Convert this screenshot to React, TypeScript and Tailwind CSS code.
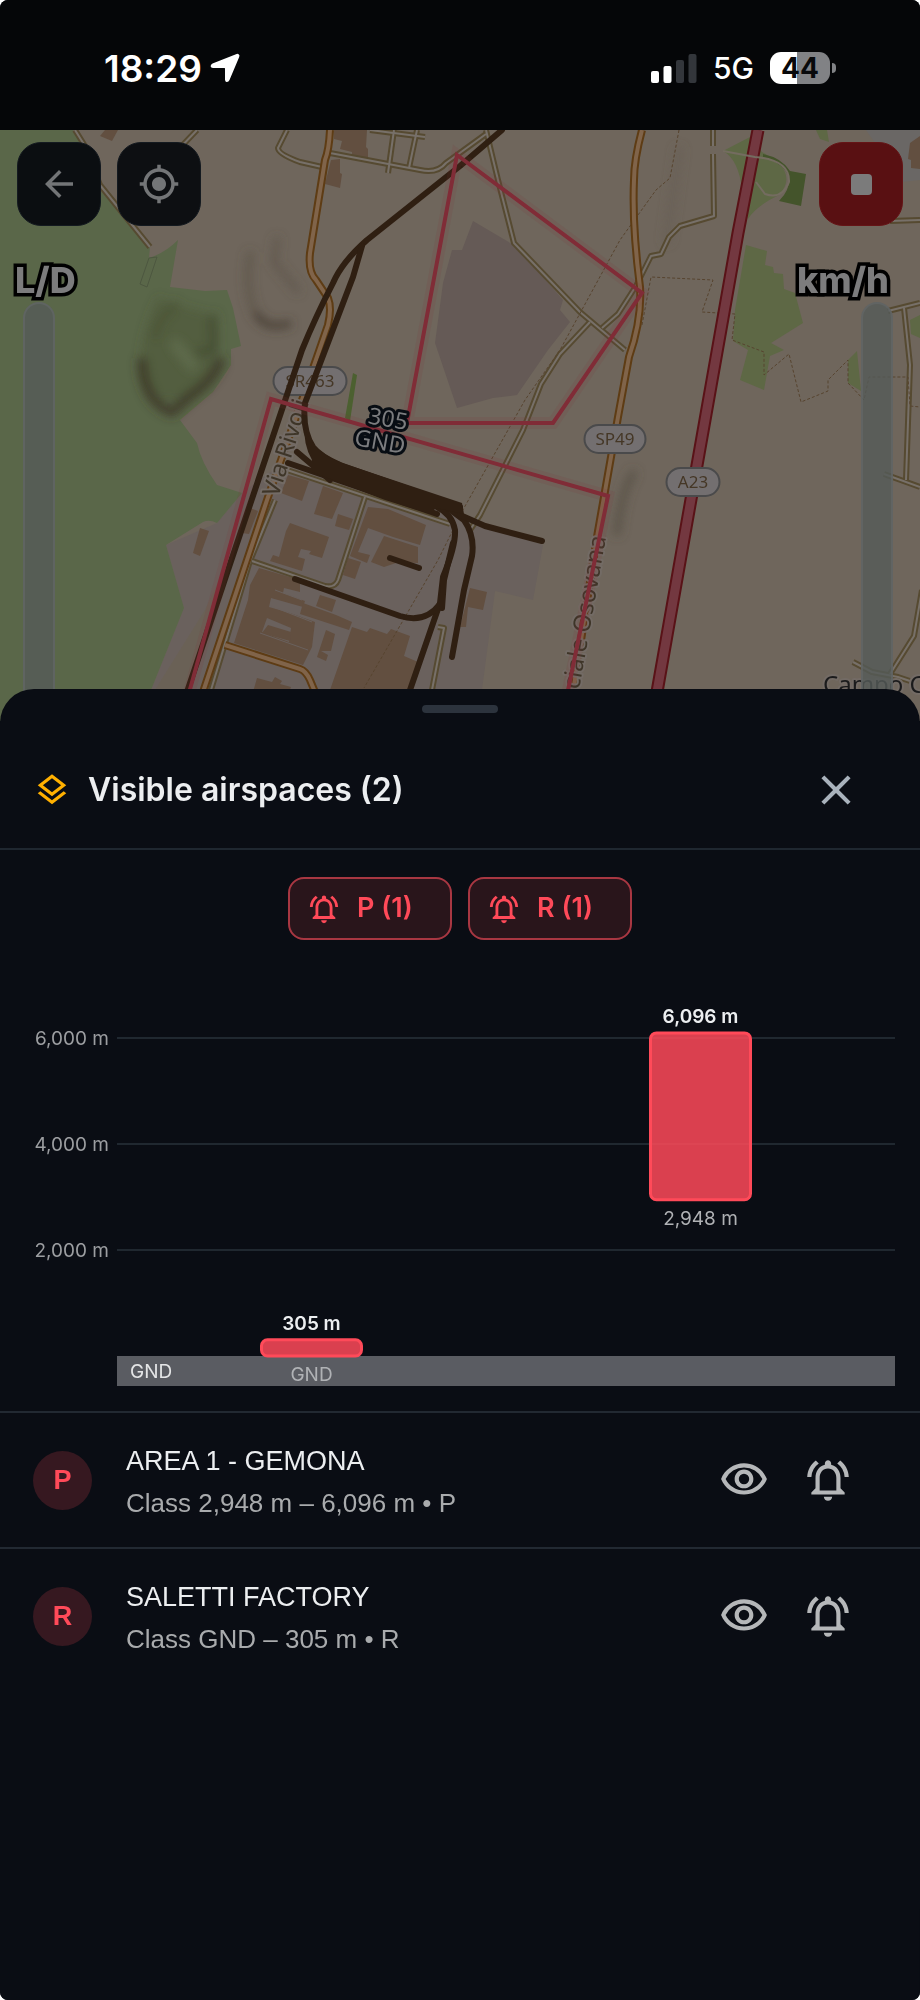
import {
  MdArrowBack,
  MdClose,
  MdMyLocation,
  MdOutlineLayers,
  MdOutlineNotificationsActive,
  MdOutlineVisibility,
} from "react-icons/md";

type Airspace = {
  name: string;
  kind: string;
  floor: number;
  ceiling: number;
};

const airspaces: Airspace[] = [
  { name: "AREA 1 - GEMONA", kind: "P", floor: 2948, ceiling: 6096 },
  { name: "SALETTI FACTORY", kind: "R", floor: 0, ceiling: 305 },
];

const formatAltitude = (m: number) =>
  m === 0 ? "GND" : `${m.toLocaleString("en-US")} m`;

const minorRoads = [
  "M75 130 L85 146 L100 185 L150 247",
  "M197 130 L178 150 L160 172",
  "M287 130 L278 148 Q278 154 300 162 L322 167",
  "M330 153 L420 170 Q437 174 446 163 L486 134",
  "M370 130 L425 137",
  "M394 130 L388 173",
  "M417 130 L409 168",
  "M486 130 L498 180 L514 243 L580 312 L625 350",
  "M590 322 L560 354 L541 384 L523 430 L480 515 L470 530",
  "M602 328 L618 314 L636 286 L651 256 L661 254 L669 237 L680 226 L714 216 L713 154",
  "M713 146 L713 130",
  "M890 221 L920 220",
  "M888 311 L920 303",
  "M904 308 L910 365 L906 480",
  "M884 474 L920 487",
  "M853 662 L872 672 L898 677 L910 681",
  "M890 674 L914 636 L922 590",
  "M280 468 L290 471 L450 524",
  "M365 497 L338 580 Q335 588 325 586 L252 561",
  "M275 500 L250 561 L211 690",
  "M432 690 L444 628 L438 627",
];

const orangeRoads = [
  "M330 130 Q329 150 325 160 L310 253 Q308 272 316 280 L328 298 Q332 308 328 325 L302 400 L267 500 L203 692",
  "M225 645 L300 669 Q306 671 310 680 L315 692",
  "M642 130 Q634 160 634 180 Q632 225 640 287 Q642 320 629 357 L618 417 L597 537 L573 692",
];

const footpaths = [
  "M679 130 L670 178 L656 190 L620 240 L560 350 L525 400 L460 515",
  "M642 325 L651 277 L713 280 L702 312 L735 314 L732 340 L764 352 L764 375 L789 354 L801 402 L828 391 L828 380 L848 360 L848 383 L864 400 L869 377 L908 377 L910 406 L920 407",
  "M453 530 L438 560 L364 688",
];

const railways = [
  "M502 130 L460 166 L367 240 Q342 262 333 283 Q315 318 302 350 L187 692",
  "M362 246 L353 277 L305 403 Q302 430 313 447 Q320 456 340 465 L460 507",
  "M288 463 L437 514",
  "M297 452 L330 480",
  "M437 507 Q452 514 455 530 Q456 545 443 577 L440 603 L410 690",
  "M295 579 L400 616 Q425 624 440 604",
  "M390 558 L419 568",
  "M444 505 L464 520 Q475 536 472 556 L464 590 L452 657",
  "M453 543 L444 580 L442 608",
  "M460 515 L485 526 L542 541",
];

const buildings = [
  "M334 130 L367 130 L366 147 L368 149 L368 158 L352 156 L352 152 L340 149 L342 141 L334 139Z",
  "M331 160 L340 159 L340 173 L342 174 L340 188 L325 184Z",
  "M105 130 L118 130 L112 141 L100 136Z",
  "M910 143 L920 136 L920 169 L911 168 L911 160 L908 159Z",
  "M288 475 L309 481 L302 501 L281 493Z",
  "M323 486 L343 493 L332 519 L314 514Z",
  "M338 514 L353 519 L349 530 L335 526Z",
  "M290 523 L312 531 L315 532 L329 537 L322 558 L309 554 L311 551 L301 549 L298 557 L305 559 L302 571 L270 561 L273 555 L279 557 L286 531Z",
  "M368 507 L388 509 L426 525 L420 545 L393 537 L368 528 L358 552 L370 555 L367 563 L350 556Z",
  "M384 536 L418 547 L418 563 L399 562 L384 567 L371 562Z",
  "M348 558 L361 562 L355 579 L343 575Z",
  "M200 528 L209 531 L200 556 L193 553Z",
  "M250 508 L258 511 L249 534 L242 533Z",
  "M259 568 L300 580 L300 592 L284 588 L283 593 L305 601 L303 607 L271 598 L269 607 L290 613 L315 622 L312 647 L303 665 L234 643 L248 600 L250 585Z",
  "M303 603 L336 615 L352 622 L349 630 L300 614Z",
  "M320 595 L336 600 L332 612 L316 606Z",
  "M326 630 L335 634 L331 651 L321 651 L328 655 L326 661 L317 657Z",
  "M352 627 L367 632 L370 628 L387 634 L391 629 L410 636 L404 656 L418 662 L409 690 L330 690Z",
  "M257 678 L272 682 L275 677 L282 681 L280 684 L291 687 L289 692 L253 692Z",
  "M470 588 L487 592 L483 610 L468 607 L466 627 L460 627Z",
];

const greens = [
  "M0 130 L73 130 L84 147 L100 190 L150 247 L149 258 Q165 253 178 240 L170 287 L205 291 L227 290 L233 308 L241 346 L231 349 L231 365 L213 392 L180 420 L197 443 Q201 462 217 485 L242 493 L217 523 Q209 519 203 522 L166 545 L184 608 L151 690 L151 725 L0 725Z",
  "M750 137 L723 151 Q739 160 742 190 L748 219 Q756 206 779 195 Q800 172 762 152Z",
  "M746 245 L767 251 L765 265 L773 267 L774 273 L783 274 L784 289 L795 293 L803 323 L771 343 L784 350 L770 356 L764 390 L740 380 L748 350 L733 341 L735 310Z",
  "M816 130 L827 130 L829 142 L820 139Z",
  "M848 360 L857 351 L861 391 L848 383Z",
  "M910 320 L920 315 L920 338 L911 334Z",
];

function RouteBadge({ x, y, width, label }: { x: number; y: number; width: number; label: string }) {
  return (
    <g>
      <rect x={x - width / 2} y={y - 14} width={width} height={28} rx={14} fill="#736f70" stroke="#4a4a4b" strokeWidth={2} />
      <text x={x} y={y + 6} textAnchor="middle" fontSize={17} fill="#453726">
        {label}
      </text>
    </g>
  );
}

function TerrainMap() {
  return (
    <svg
      viewBox="0 130 920 591"
      preserveAspectRatio="xMidYMin slice"
      className="absolute inset-0 h-full w-full"
      fontFamily="'Noto Sans', 'Open Sans', sans-serif"
      role="img"
      aria-label="Terrain map"
    >
      <defs>
        <filter id="relief" x="-30%" y="-30%" width="160%" height="160%">
          <feGaussianBlur stdDeviation="5" />
        </filter>
      </defs>
      <rect y={130} width={920} height={591} fill="#6f665c" />

      {/* land use */}
      <path d="M242 493 L217 523 L166 545 L184 608 L151 690 L240 720 L478 720 L495 591 L533 600 L543 545 L460 515 L280 465Z" fill="#6a615d" />
      <path d="M235 545 L205 610 L155 690 L190 690 L225 590Z" fill="#6a6156" />
      <path d="M473 221 L517 247 L563 300 L560 310 L570 322 L548 350 L517 395 L493 398 L457 408 L435 343 L443 283 L452 250 L462 250Z" fill="#655a56" />
      <path d="M866 130 L920 130 L920 180 L902 182Z" fill="#6a6765" />
      {greens.map((d, i) => (
        <path key={d} d={d} fill={i === 0 ? "#5a6749" : "#5e6845"} />
      ))}
      <path d="M763 154 Q782 158 790 171 L806 174 L801 206 L779 201 Q790 190 789 178 Q785 164 763 157Z" fill="#44542b" />
      <path d="M353 373 L357 375 L350 421 L345 418Z" fill="#4c6030" />
      <path d="M149 258 L157 257 L147 287 L140 284Z" fill="none" stroke="#4d5740" />

      {/* hill shading */}
      <g filter="url(#relief)" fill="none" strokeLinecap="round" strokeLinejoin="round">
        <path d="M160 300 Q140 340 144 380 Q160 404 190 394 Q222 370 215 315" fill="#4c5638" stroke="#4c5638" strokeWidth={6} opacity={0.45} />
        <path d="M175 305 Q158 320 155 335" stroke="#46502f" strokeWidth={9} opacity={0.5} />
        <path d="M142 362 Q144 402 172 412 L190 396 Q212 382 220 362" stroke="#3b3424" strokeWidth={10} opacity={0.8} />
        <path d="M212 320 L214 350 L200 352" stroke="#43482d" strokeWidth={9} opacity={0.6} />
        <path d="M176 345 L192 365" stroke="#626f50" strokeWidth={12} opacity={0.7} />
        <path d="M250 255 Q244 290 256 315" stroke="#574d42" strokeWidth={8} opacity={0.5} />
        <path d="M258 316 Q266 330 288 324" stroke="#473e33" strokeWidth={8} opacity={0.8} />
        <path d="M277 240 L274 262 L297 290" stroke="#5a5147" strokeWidth={7} opacity={0.6} />
        <path d="M633 474 Q622 490 617 532" stroke="#564e43" strokeWidth={8} opacity={0.7} />
        <path d="M679 150 L667 240" stroke="#675e54" strokeWidth={7} opacity={0.7} />
      </g>

      {buildings.map((d) => (
        <path key={d} d={d} fill="#624f40" />
      ))}
      <path d="M267 618 L291 628 L289 642 L262 632Z" fill="#6a615d" />
      <path d="M268 625 L291 632 L290 641 L262 633Z" fill="#624f40" />
      <path d="M260 633 L308 650 M271 606 L312 622 M275 590 L302 600" stroke="#6a615d" fill="none" />

      {/* roads: dark casing first, lighter fill above */}
      <g fill="none" strokeLinejoin="round">
        {minorRoads.map((d) => (
          <path key={d} d={d} stroke="#564a31" strokeWidth={6} />
        ))}
        {minorRoads.map((d) => (
          <path key={d} d={d} stroke="#777069" strokeWidth={2} />
        ))}
        {footpaths.map((d) => (
          <path key={d} d={d} stroke="#57442f" strokeWidth={1} strokeDasharray="3 2" />
        ))}
        {orangeRoads.map((d) => (
          <path key={d} d={d} stroke="#5e3c14" strokeWidth={8} />
        ))}
        {orangeRoads.map((d) => (
          <path key={d} d={d} stroke="#80644a" strokeWidth={4} />
        ))}
        <path d="M758 130 L738 233 L657 692" stroke="#591217" strokeWidth={13} />
        <path d="M758 130 L738 233 L657 692" stroke="#733840" strokeWidth={9} />
        <path d="M723 151 L755 157 Q790 160 789 182 Q782 200 765 194 L756 182" stroke="#746c60" strokeWidth={2} />
      </g>

      <RouteBadge x={310} y={381} width={73} label="SR463" />
      <g fontSize={24} fill="#3e3528" stroke="#736b65" strokeWidth={4} paintOrder="stroke" strokeLinejoin="round">
        <text transform="translate(278 498) rotate(-72)">Via Rivoli</text>
        <text transform="translate(606 537) rotate(-80)" textAnchor="end">
          ciale Osovana
        </text>
        <text x={823} y={693} fill="#1b1b1c">
          Campo C
        </text>
      </g>

      <g fill="none" stroke="#2f1f12" strokeWidth={6} strokeLinecap="round" strokeLinejoin="round">
        {railways.map((d) => (
          <path key={d} d={d} />
        ))}
      </g>
      <path d="M304 420 Q306 450 345 464 L462 503 L464 514 L436 508 L430 514 L385 500 L312 472 L312 460 Q303 445 304 420Z" fill="#2f1f12" />

      {/* airspace outlines */}
      <g fill="none" strokeLinejoin="miter">
        <path d="M457 155 L642 293 L553 423 L407 423Z" stroke="#803038" strokeWidth={12} opacity={0.12} />
        <path d="M187 700 L271 399 L608 496 L566 700" stroke="#803038" strokeWidth={12} opacity={0.12} />
        <path d="M457 155 L642 293 L553 423 L407 423Z" stroke="#802c37" strokeWidth={4} />
        <path d="M187 700 L271 399 L608 496 L566 700" stroke="#802c37" strokeWidth={4} />
      </g>

      <RouteBadge x={615} y={439} width={61} label="SP49" />
      <RouteBadge x={693} y={482} width={53} label="A23" />

      <g
        transform="translate(383 430) rotate(10)"
        fontSize={23}
        textAnchor="middle"
        fill="#7c7d7f"
        stroke="#080d13"
        strokeWidth={6}
        paintOrder="stroke"
        strokeLinejoin="round"
      >
        <text x={3} y={-4}>305</text>
        <text x={-1} y={20}>GND</text>
      </g>
    </svg>
  );
}

function StatusBar() {
  return (
    <div className="flex h-[130px] items-center justify-between bg-[#050608] pt-1.5 pr-[84px] pl-[104px] font-['Inter',sans-serif] text-white">
      <div className="flex items-center gap-2">
        <span className="text-[37px] leading-none font-semibold">18:29</span>
        <svg viewBox="0 0 30 30" className="h-[30px] w-[30px]" fill="currentColor" aria-hidden="true">
          <path d="M28.600 1.300 Q30 2 29.200 4 L19.500 27 Q18.500 29.300 16.500 29 Q15 28.500 15 26.500 L15 15.500 Q15 15 14.500 15 L3 15 Q.8 14.800.6 13.200 Q.6 11.500 2.500 10.500 L26 1.200 Q27.700.5 28.600 1.300Z" />
        </svg>
      </div>
      <div className="flex items-center">
        <svg viewBox="0 0 46 29" className="h-[29px] w-[46px]" aria-hidden="true">
          <rect x="0" y="17" width="8" height="12" rx="2" fill="#fff" />
          <rect x="12.500" y="12" width="8" height="17" rx="2" fill="#fff" />
          <rect x="25" y="6" width="8" height="23" rx="2" fill="#33363b" />
          <rect x="37.500" y="0" width="8" height="29" rx="2" fill="#33363b" />
        </svg>
        <span className="ml-4 text-[30px] leading-none font-medium">5G</span>
        <div className="ml-4 flex h-8 w-[60px] items-center justify-center rounded-[11px] bg-linear-to-r from-white from-45% to-[#818285] to-45% text-[28px] leading-none font-bold text-[#08090b]">
          44
        </div>
        <div className="ml-0.5 h-2.5 w-1 rounded-r-full bg-[#818285]" />
      </div>
    </div>
  );
}

const gaugeLabel =
  "text-[36px] leading-[44px] font-extrabold text-[#7c7c7d] [paint-order:stroke] [-webkit-text-stroke:7px_#000]";
const gaugeTrack = "w-8 flex-1 rounded-t-full border-2 border-b-0 border-[#66696b]/60 bg-[#555b59]/80";

function MapPanel() {
  return (
    <section className="relative flex h-[591px] flex-col overflow-hidden font-['Inter',sans-serif]">
      <TerrainMap />
      <div className="relative flex gap-4 px-[17px] pt-3">
        <button aria-label="Back" className="grid size-[84px] place-items-center rounded-3xl border border-[#141a20] bg-[#0b0e11] text-[#737577]">
          <MdArrowBack size={42} />
        </button>
        <button aria-label="Center on position" className="grid size-[84px] place-items-center rounded-3xl border border-[#141a20] bg-[#0d0f12] text-[#737577]">
          <MdMyLocation size={42} />
        </button>
        <button aria-label="Stop recording" className="ml-auto grid size-[84px] place-items-center rounded-3xl border border-[#651416] bg-[#591012]">
          <span className="size-[21px] rounded-sm bg-[#7b7b7b]" />
        </button>
      </div>
      <div className="relative flex flex-1 justify-between px-[15px] pt-8">
        <div className="flex flex-col items-start">
          <span className={gaugeLabel}>L/D</span>
          <div className={`ml-2 ${gaugeTrack}`} />
        </div>
        <div className="flex flex-col items-end">
          <span className={`mr-4 ${gaugeLabel}`}>km/h</span>
          <div className={`mr-3 ${gaugeTrack}`} />
        </div>
      </div>
    </section>
  );
}

const GROUND_Y = 416;
const METERS_TO_PX = 0.053;
const altitudeToY = (m: number) => GROUND_Y - m * METERS_TO_PX;

function AltitudeChart() {
  const columns = [...airspaces].sort((a, b) => a.floor - b.floor);

  return (
    <svg
      viewBox="0 0 920 471"
      className="block w-full"
      fontFamily="Inter, sans-serif"
      fontSize={19}
      role="img"
      aria-label="Airspace altitudes"
    >
      {[2000, 4000, 6000].map((m) => (
        <g key={m}>
          <line x1={117} x2={895} y1={altitudeToY(m)} y2={altitudeToY(m)} stroke="#202830" strokeWidth={2} />
          <text x={109} y={altitudeToY(m) + 7} textAnchor="end" fill="#9c9ea1">
            {formatAltitude(m)}
          </text>
        </g>
      ))}
      <rect x={117} y={GROUND_Y} width={778} height={30} fill="#5a5c62" />
      <text x={130} y={GROUND_Y + 22} fill="#e4e5e6">
        GND
      </text>
      {columns.map((space, i) => {
        const center = 117 + (778 / columns.length) * (i + 0.5);
        const top = altitudeToY(space.ceiling);
        const bottom = altitudeToY(space.floor);
        return (
          <g key={space.name} textAnchor="middle">
            <rect
              x={center - 50}
              y={top}
              width={100}
              height={bottom - top}
              rx={6}
              fill="#ff4a59"
              fillOpacity={0.85}
              stroke="#ff4a59"
              strokeWidth={3}
            />
            <text x={center} y={top - 10} fontWeight={600} fill="#eceef0">
              {formatAltitude(space.ceiling)}
            </text>
            <text x={center} y={bottom + 25} fill="#b0b2b5">
              {formatAltitude(space.floor)}
            </text>
          </g>
        );
      })}
    </svg>
  );
}

function AirspaceRow({ space }: { space: Airspace }) {
  return (
    <li className="flex h-[136px] items-center border-t-2 border-[#222932] pr-[67px] pl-[33px]">
      <span className="grid size-[59px] shrink-0 place-items-center rounded-full bg-[#361820] text-[27px] font-bold text-[#ff4a59]">
        {space.kind}
      </span>
      <div className="ml-[34px] min-w-0 flex-1 pt-1">
        <h2 className="text-[27px] leading-[42px] text-[#eceef0]">{space.name}</h2>
        <p className="text-[26px] leading-[42px] text-[#a9abad]">
          Class {formatAltitude(space.floor)} – {formatAltitude(space.ceiling)} • {space.kind}
        </p>
      </div>
      <div className="flex gap-[34px] text-[#b5b7b9]">
        <button aria-label={`Hide ${space.name}`}>
          <MdOutlineVisibility size={50} />
        </button>
        <button aria-label={`Alerts for ${space.name}`}>
          <MdOutlineNotificationsActive size={50} />
        </button>
      </div>
    </li>
  );
}

export default function App() {
  return (
    <div className="bg-white">
      <main className="flex min-h-screen flex-col overflow-hidden rounded-lg bg-[#0a0d14] font-['Liberation_Sans',Arial,sans-serif]">
        <StatusBar />
        <MapPanel />

        <section className="relative -mt-8 flex-1 rounded-t-[34px] bg-[#0a0d14]">
          <div className="flex justify-center pt-4">
            <div className="h-2 w-[76px] rounded-full bg-[#2c333d]" />
          </div>
          <header className="flex h-[137px] items-center border-b-2 border-[#1f2730] pt-[18px] pr-[59px] pl-[33px]">
            <MdOutlineLayers size={38} className="text-[#ffb000]" />
            <h1 className="ml-[17px] font-['Inter',sans-serif] text-[32px] leading-10 font-semibold text-[#eceef0]">
              Visible airspaces ({airspaces.length})
            </h1>
            <button aria-label="Close" className="ml-auto text-[#a9b2bc]">
              <MdClose size={50} />
            </button>
          </header>

          <div className="flex justify-center gap-4 pt-[27px]">
            {airspaces.map(({ kind }) => (
              <button
                key={kind}
                className="flex h-[63px] w-[164px] items-center gap-4 rounded-2xl border-2 border-[#a83742] bg-[#29151b] pl-[17px] font-['Inter',sans-serif] text-[27px] font-semibold text-[#ff4a59]"
              >
                <MdOutlineNotificationsActive size={34} />
                {kind} (1)
              </button>
            ))}
          </div>

          <AltitudeChart />

          <ul>
            {airspaces.map((space) => (
              <AirspaceRow key={space.name} space={space} />
            ))}
          </ul>
        </section>
      </main>
    </div>
  );
}
